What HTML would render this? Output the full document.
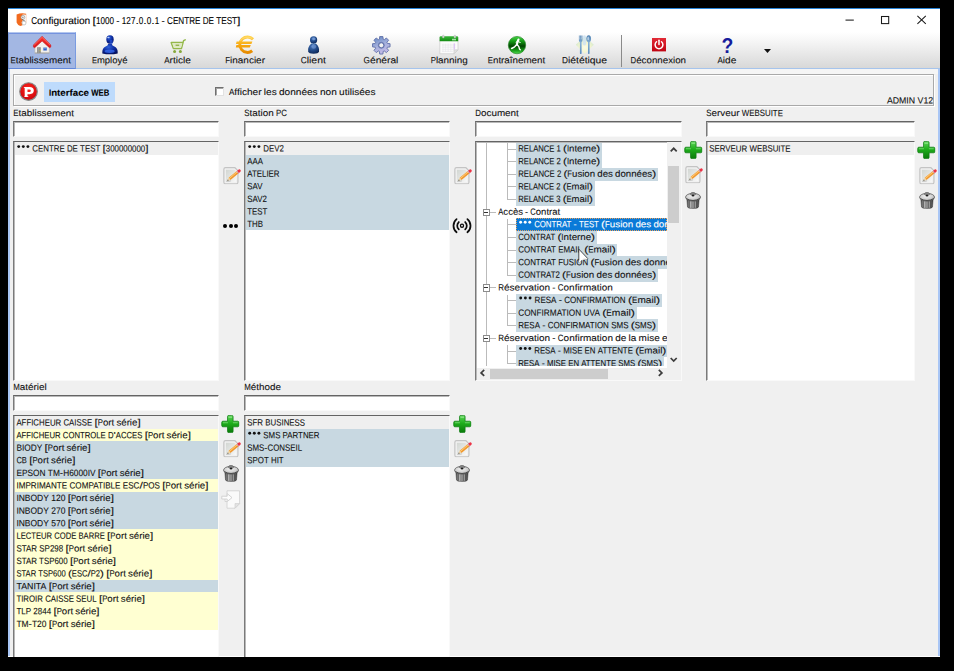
<!DOCTYPE html>
<html><head><meta charset="utf-8"><title>Configuration</title>
<style>
html,body{margin:0;padding:0;background:#000;}
body{width:954px;height:671px;position:relative;overflow:hidden;font-family:"Liberation Sans",sans-serif;}
.b{position:absolute;box-sizing:border-box;}
.t{text-rendering:geometricPrecision;-webkit-text-stroke:0.1px currentColor;position:absolute;left:0;top:0;font-size:9.1px;color:#111;}
.t u{position:absolute;border-radius:50%;background:currentColor;}
.t b{position:absolute;left:0;top:0;transform-origin:0 0;white-space:pre;line-height:1;font-weight:inherit;}
svg{position:absolute;overflow:visible;}
</style></head><body>
<svg width="0" height="0" style="left:0;top:0"><defs>
<linearGradient id="gPlus" x1="0" y1="0" x2="0" y2="1"><stop offset="0" stop-color="#5fd65a"/><stop offset="0.45" stop-color="#1fae1c"/><stop offset="1" stop-color="#0a7a0a"/></linearGradient>
<linearGradient id="gPencil" x1="0" y1="0" x2="1" y2="1"><stop offset="0" stop-color="#ffbb50"/><stop offset="1" stop-color="#e67c12"/></linearGradient>
<linearGradient id="gCan" x1="0" y1="0" x2="1" y2="0"><stop offset="0" stop-color="#4a4a4a"/><stop offset="0.35" stop-color="#b9b9b9"/><stop offset="0.6" stop-color="#8c8c8c"/><stop offset="1" stop-color="#3c3c3c"/></linearGradient>
<radialGradient id="gLid" cx="0.45" cy="0.35" r="0.7"><stop offset="0" stop-color="#f2f2f2"/><stop offset="0.6" stop-color="#cfcfcf"/><stop offset="1" stop-color="#8a8a8a"/></radialGradient>
<linearGradient id="gPaper" x1="0" y1="0" x2="1" y2="1"><stop offset="0" stop-color="#d2d6d2"/><stop offset="0.6" stop-color="#e6e8e6"/><stop offset="1" stop-color="#fafafa"/></linearGradient>
<radialGradient id="gP" cx="0.5" cy="0.35" r="0.7"><stop offset="0" stop-color="#ff2a22"/><stop offset="1" stop-color="#c80008"/></radialGradient>
<linearGradient id="gRoof" x1="0" y1="0" x2="0" y2="1"><stop offset="0" stop-color="#f8352e"/><stop offset="1" stop-color="#dc1418"/></linearGradient>
<radialGradient id="gBlue" cx="0.4" cy="0.3" r="0.8"><stop offset="0" stop-color="#2f62dc"/><stop offset="0.5" stop-color="#0c2a9c"/><stop offset="1" stop-color="#020a52"/></radialGradient>
<radialGradient id="gPawn" cx="0.4" cy="0.3" r="0.8"><stop offset="0" stop-color="#4a78bc"/><stop offset="0.55" stop-color="#1e4684"/><stop offset="1" stop-color="#0c2250"/></radialGradient>
<linearGradient id="gEuro" gradientUnits="userSpaceOnUse" x1="0" y1="2" x2="0" y2="18"><stop offset="0" stop-color="#ffd24a"/><stop offset="0.5" stop-color="#f7a810"/><stop offset="1" stop-color="#e58a00"/></linearGradient>
<linearGradient id="gGear" x1="0.3" y1="0" x2="0.7" y2="1"><stop offset="0" stop-color="#6a8bc4"/><stop offset="0.45" stop-color="#a3afdc"/><stop offset="1" stop-color="#c9bce8"/></linearGradient>
<linearGradient id="gCal" x1="0" y1="0" x2="0" y2="1"><stop offset="0" stop-color="#3cb83c"/><stop offset="1" stop-color="#128a12"/></linearGradient>
<linearGradient id="gRun" x1="0" y1="0" x2="0" y2="1"><stop offset="0" stop-color="#46d446"/><stop offset="0.28" stop-color="#159a15"/><stop offset="0.56" stop-color="#024402"/><stop offset="0.8" stop-color="#169c16"/><stop offset="1" stop-color="#52dc52"/></linearGradient>
<linearGradient id="gFork" x1="0" y1="0" x2="0" y2="1"><stop offset="0" stop-color="#4c7fb0"/><stop offset="0.4" stop-color="#86b0d6"/><stop offset="1" stop-color="#5c8fc0"/></linearGradient>
<radialGradient id="gDiam" cx="0.5" cy="0.62" r="0.55"><stop offset="0" stop-color="#fbfbe6"/><stop offset="0.55" stop-color="#f3f5cf"/><stop offset="1" stop-color="#d2e8cf"/></radialGradient>
<linearGradient id="gPow" x1="0" y1="0" x2="0" y2="1"><stop offset="0" stop-color="#e22a36"/><stop offset="1" stop-color="#c00412"/></linearGradient>

<symbol id="iPlus" viewBox="0 0 18 18"><path d="M6.2 1.6 Q6.2 0.4 7.6 0.4 H10.4 Q11.8 0.4 11.8 1.6 V6.2 H16.4 Q17.6 6.2 17.6 7.6 V10.4 Q17.6 11.8 16.4 11.8 H11.8 V16.4 Q11.8 17.6 10.4 17.6 H7.6 Q6.2 17.6 6.2 16.4 V11.8 H1.6 Q0.4 11.8 0.4 10.4 V7.6 Q0.4 6.2 1.6 6.2 H6.2 Z" fill="url(#gPlus)" stroke="#0c7a10" stroke-width="0.7"/><path d="M7.2 1.6 H10.8 V3 H7.2Z M1.6 7.2 H6.6 V8.2 H1.6Z M11.6 7.2 H16.4 V8.2 H11.6Z" fill="#a5f0a0" opacity="0.55"/></symbol>

<symbol id="iEdit" viewBox="0 0 19 18"><path d="M2.6 0.7 H12.4 L15.6 3.8 V15.8 Q15.6 17.5 13.9 17.5 H2.6 Q0.9 17.5 0.9 15.8 V2.4 Q0.9 0.7 2.6 0.7Z" fill="#f1f1f1" stroke="#c4c4c4" stroke-width="1.25"/><path d="M3 2.8 H11.8 L13.6 4.6 V15.4 H3Z" fill="url(#gPaper)"/><path d="M7.77 13.55 L5.85 11.23 L14.08 4.42 L16.0 6.74Z" fill="url(#gPencil)"/><path d="M6.5 12 L14.7 5.2" stroke="#ffd58a" stroke-width="0.8"/><path d="M14.08 4.42 L16.0 2.84 Q17.4 1.9 18.3 3.1 Q19.2 4.3 17.9 5.2 L16.0 6.74Z" fill="#ec3346"/><path d="M14.08 4.42 L14.7 3.9 L16.6 6.2 L16.0 6.74Z" fill="#c9c9c9"/><path d="M4.5 14.3 L5.85 11.23 L7.77 13.55Z" fill="#efd2a0"/><path d="M4.5 14.3 L5.05 13.0 L5.9 14.0Z" fill="#222"/><path d="M3.4 15 Q6 15.2 8.4 14.4" stroke="#9a9a9a" stroke-width="0.7" fill="none" opacity="0.7"/></symbol>

<symbol id="iTrash" viewBox="0 0 16 17"><path d="M1.9 7.4 L2.5 14.9 Q2.7 16.4 8 16.5 Q13.3 16.4 13.5 14.9 L14.1 7.4Z" fill="url(#gCan)" stroke="#3b3b3b" stroke-width="0.5"/><path d="M4.6 9 V15.6 M6.9 9.2 V16 M9.3 9.2 V16 M11.5 9 V15.6" stroke="#4a4a4a" stroke-width="0.8" opacity="0.75"/><path d="M5.7 9.2 V15.8 M10.4 9.2 V15.8" stroke="#d0d0d0" stroke-width="0.7" opacity="0.6"/><ellipse cx="8.05" cy="5.2" rx="7.5" ry="3.9" fill="url(#gLid)" stroke="#4a4a4a" stroke-width="0.7"/><path d="M5.2 2.6 Q5.6 0.3 8 0.3 Q10.4 0.3 10.8 2.6 Q8 1.9 5.2 2.6Z" fill="#8a8a8a" stroke="#555" stroke-width="0.5"/><ellipse cx="8" cy="3.4" rx="1.5" ry="1.0" fill="#1c1c1c"/><path d="M1.4 6.6 Q8 10.4 14.7 6.6" stroke="#3a3a3a" stroke-width="0.8" fill="none"/></symbol>

<symbol id="iImport" viewBox="0 0 20 19"><path d="M6 0.8 H18.6 V13.6 L14 18.2 H6 V11.5 H4 V6.5 H6Z" fill="#fafafa" stroke="#d2d2d2" stroke-width="0.9"/><path d="M18.6 13.6 H14 V18.2Z" fill="#e4e4e4" stroke="#cecece" stroke-width="0.7"/><path d="M0.8 6.2 H6.2 V3.6 L11 7.6 L6.2 11.6 V9 H0.8Z" fill="#fdfdfd" stroke="#cfcfcf" stroke-width="0.9"/></symbol>

<symbol id="iWave" viewBox="0 0 20 18"><g fill="none" stroke="#0c0c0c" stroke-width="1.8" stroke-linecap="round"><circle cx="10" cy="9" r="1.6" stroke-width="1.3"/><path d="M6.7 5.2 A5.2 5.2 0 0 0 6.7 12.8"/><path d="M13.3 5.2 A5.2 5.2 0 0 1 13.3 12.8"/><path d="M4.4 2.2 A8.8 8.8 0 0 0 4.4 15.8"/><path d="M15.6 2.2 A8.8 8.8 0 0 1 15.6 15.8"/></g></symbol>
</defs></svg>
<div class="b" style="left:8.00px;top:8.00px;width:932.00px;height:649.00px;background:#f0f0f0;"></div>
<div class="b" style="left:8.00px;top:8.00px;width:932.00px;height:24.00px;background:#ffffff;"></div>
<div class="b" style="left:8.00px;top:8.00px;width:932.00px;height:1.00px;background:#2b86d9;"></div>
<span class="t" style="font-size:10.0px;color:#000;"><b style="transform:translate(31.20px,17.00px) scale(0.812,1) rotate(.05deg)">C</b><b style="transform:translate(37.07px,17.00px) scale(1.017,1) rotate(.05deg)">onfiguration</b><b style="transform:translate(92.52px,17.00px) scale(1.233,1) rotate(.05deg)">[</b><b style="transform:translate(95.94px,17.00px) scale(0.812,1) rotate(.05deg)">1000</b><b style="transform:translate(116.30px,17.00px) scale(0.979,1) rotate(.05deg)">-</b><b style="transform:translate(121.85px,17.00px) scale(0.812,1) rotate(.05deg)">127</b><b style="transform:translate(135.40px,17.00px) scale(1.233,1) rotate(.05deg)">.</b><b style="transform:translate(138.83px,17.00px) scale(0.812,1) rotate(.05deg)">0</b><b style="transform:translate(143.34px,17.00px) scale(1.233,1) rotate(.05deg)">.</b><b style="transform:translate(146.77px,17.00px) scale(0.812,1) rotate(.05deg)">0</b><b style="transform:translate(151.28px,17.00px) scale(1.233,1) rotate(.05deg)">.</b><b style="transform:translate(154.71px,17.00px) scale(0.812,1) rotate(.05deg)">1</b><b style="transform:translate(161.52px,17.00px) scale(0.979,1) rotate(.05deg)">-</b><b style="transform:translate(167.07px,17.00px) scale(0.812,1) rotate(.05deg)">CENTRE</b><b style="transform:translate(202.75px,17.00px) scale(0.812,1) rotate(.05deg)">DE</b><b style="transform:translate(216.32px,17.00px) scale(0.812,1) rotate(.05deg)">TEST</b><b style="transform:translate(237.08px,17.00px) scale(1.233,1) rotate(.05deg)">]</b></span>
<svg style="left:15.6px;top:13px" width="11" height="13.4" viewBox="0 0 11 13.4"><path d="M0.6 1.4 Q5.5 -0.6 10.2 0.8 L10.2 9.6 Q8 12.2 4.4 13 Q1.4 12 0.6 9.6Z" fill="#f26a1e"/><path d="M6.6 1.6 Q8.6 1.2 10.2 1.8 L10.2 9.6 Q8.8 11.4 6.6 12.4 L5.6 9.6 L6.8 7 L5.2 4.4Z" fill="#f6f2ee"/><circle cx="6.9" cy="4.3" r="1.9" fill="#fff" stroke="#9a9a9a" stroke-width="0.7"/><circle cx="8" cy="10" r="2" fill="#fff" stroke="#a5a5a5" stroke-width="0.6"/><circle cx="6.9" cy="4.3" r="0.7" fill="#777"/><path d="M6 6.4 L8.6 7.8" stroke="#666" stroke-width="0.9"/></svg>
<svg style="left:840px;top:10px" width="96" height="20" viewBox="0 0 96 20"><g stroke="#1a1a1a" stroke-width="1.05" fill="none"><path d="M5.5 10.1 H13.8"/><rect x="41.5" y="6.5" width="7.2" height="7.1"/><path d="M77.4 5.9 L85.8 13.8 M85.8 5.9 L77.4 13.8"/></g></svg>
<div class="b" style="left:8.00px;top:32.00px;width:932.00px;height:36.40px;background:linear-gradient(#ffffff 0%,#f6f6f6 25%,#e8e8e8 60%,#d8d8d8 100%);"></div>
<div class="b" style="left:8.00px;top:68.00px;width:932.00px;height:1.20px;background:#a6c4ec;"></div>
<div class="b" style="left:10.00px;top:69.20px;width:928.00px;height:4.80px;background:#f5f5f5;"></div>
<div class="b" style="left:8.00px;top:32.00px;width:68.00px;height:37.00px;background:#a3b7e3;border:1px solid #7a9be0;border-top:1px solid #b3c6ee;border-bottom:1px solid #6288da;box-shadow:inset 0 1px 0 #7593de;"></div>
<span class="t"><b style="transform:translate(10.50px,56.30px) scale(0.862,1) rotate(.05deg)">E</b><b style="transform:translate(15.73px,56.30px) scale(1.080,1) rotate(.05deg)">tablissement</b></span>
<span class="t"><b style="transform:translate(91.90px,56.30px) scale(0.832,1) rotate(.05deg)">E</b><b style="transform:translate(96.95px,56.30px) scale(1.042,1) rotate(.05deg)">mployé</b></span>
<span class="t"><b style="transform:translate(164.20px,56.30px) scale(0.883,1) rotate(.05deg)">A</b><b style="transform:translate(169.56px,56.30px) scale(1.106,1) rotate(.05deg)">rticle</b></span>
<span class="t"><b style="transform:translate(225.20px,56.30px) scale(0.875,1) rotate(.05deg)">F</b><b style="transform:translate(230.07px,56.30px) scale(1.096,1) rotate(.05deg)">inancier</b></span>
<span class="t"><b style="transform:translate(300.75px,56.30px) scale(0.913,1) rotate(.05deg)">C</b><b style="transform:translate(306.75px,56.30px) scale(1.144,1) rotate(.05deg)">lient</b></span>
<span class="t"><b style="transform:translate(363.60px,56.30px) scale(0.898,1) rotate(.05deg)">G</b><b style="transform:translate(369.95px,56.30px) scale(1.124,1) rotate(.05deg)">énéral</b></span>
<span class="t"><b style="transform:translate(430.65px,56.30px) scale(0.866,1) rotate(.05deg)">P</b><b style="transform:translate(435.91px,56.30px) scale(1.085,1) rotate(.05deg)">lanning</b></span>
<span class="t"><b style="transform:translate(487.70px,56.30px) scale(0.861,1) rotate(.05deg)">E</b><b style="transform:translate(492.93px,56.30px) scale(1.078,1) rotate(.05deg)">ntraînement</b></span>
<span class="t"><b style="transform:translate(562.05px,56.30px) scale(0.908,1) rotate(.05deg)">D</b><b style="transform:translate(568.02px,56.30px) scale(1.137,1) rotate(.05deg)">iététique</b></span>
<span class="t"><b style="transform:translate(630.60px,56.30px) scale(0.854,1) rotate(.05deg)">D</b><b style="transform:translate(636.21px,56.30px) scale(1.070,1) rotate(.05deg)">éconnexion</b></span>
<span class="t"><b style="transform:translate(717.45px,56.30px) scale(0.888,1) rotate(.05deg)">A</b><b style="transform:translate(722.84px,56.30px) scale(1.112,1) rotate(.05deg)">ide</b></span>
<div class="b" style="left:621.20px;top:34.50px;width:1.00px;height:32.00px;background:#8a8a8a;"></div>
<svg style="left:764px;top:49.4px" width="7" height="4"><path d="M0 0 H7 L3.5 4Z" fill="#111"/></svg>
<svg style="left:32px;top:35px" width="20" height="19" viewBox="0 0 20 19"><path d="M2.9 12.4 L10.1 5.8 L17.3 12.4 V18.1 H2.9Z" fill="#f3f1ed" stroke="#b9b7b2" stroke-width="0.6"/><path d="M2.9 17.6 H17.3 V18.4 H2.9Z" fill="#9e9c98"/><rect x="5.1" y="12.2" width="3.7" height="5.9" fill="#8f8f8a"/><rect x="6.6" y="12.2" width="0.5" height="5.9" fill="#b5b5ae"/><rect x="7.7" y="15" width="0.8" height="1.2" fill="#e2d23a"/><rect x="11.1" y="12.3" width="3.9" height="3.5" fill="#2a5cc2" stroke="#d9dde6" stroke-width="0.5"/><rect x="11.4" y="13.4" width="3.3" height="0.7" fill="#7fa6ea"/><path d="M1.4 10 L10.1 1.2 L18.8 10 L18.8 12.1 L17.5 12.7 L10.1 6 L2.7 12.7 L1.4 12.1Z" fill="url(#gRoof)" stroke="#d4181c" stroke-width="0.5" stroke-linejoin="round"/><path d="M2.2 10.2 L10.1 2.4 L18 10.2" stroke="#ff7a6a" stroke-width="1" fill="none" opacity="0.8"/></svg>
<svg style="left:102px;top:35.3px" width="16" height="19.6" viewBox="0 0 16 19.6"><path d="M0.3 18.4 Q0 13 3.6 11.6 Q6.1 10.8 6.1 9 H9.9 Q9.9 10.8 12.4 11.6 Q16 13 15.7 18.4 Q8 20.2 0.3 18.4Z" fill="url(#gBlue)"/><ellipse cx="8" cy="4.5" rx="3.7" ry="4.2" fill="url(#gBlue)"/><ellipse cx="7.6" cy="16.3" rx="5" ry="1.7" fill="#3a6ef2" opacity="0.75"/><ellipse cx="9.2" cy="7.2" rx="1.6" ry="2.4" fill="#2a5ae6" opacity="0.6"/><ellipse cx="6.4" cy="2.5" rx="1.2" ry="0.8" fill="#cfe0ff" opacity="0.85"/></svg>
<svg style="left:170px;top:38.6px" width="16" height="14.4" viewBox="0 0 16 14.4"><g fill="none" stroke="#94b84a" stroke-width="1.5" stroke-linejoin="round" stroke-linecap="round"><path d="M15.2 0.8 L13.6 1.6 L11.4 9.6 H3.4 L1.2 3.6 H12.8"/></g><path d="M2.2 4.2 H12.4 L11 9 H3.9Z" fill="#dfe9c4"/><rect x="5.6" y="5.6" width="3.6" height="1.3" fill="#8fae46"/><circle cx="4.6" cy="12.4" r="1.5" fill="#86a83c"/><circle cx="10.4" cy="12.4" r="1.5" fill="#86a83c"/></svg>
<svg style="left:235px;top:35px" width="20" height="20" viewBox="0 0 20 20"><g fill="none" stroke="url(#gEuro)" stroke-linecap="butt"><path d="M18 4.3 A7.7 7.7 0 1 0 17.2 15.8" stroke-width="3"/></g><path d="M1.6 6.5 H17.4 L16.4 8.9 H1.0Z M1.4 10.1 H15.8 L14.8 12.5 H0.8Z" fill="url(#gEuro)"/><path d="M17.2 3.6 A8.4 8.4 0 0 0 5.2 6.2" fill="none" stroke="#ffe08a" stroke-width="0.8" opacity="0.8"/></svg>
<svg style="left:308.1px;top:35.8px" width="11.4" height="18" viewBox="0 0 11.4 18"><path d="M3.4 7.6 Q5.6 6.6 7.8 7.6 Q11.8 11 11 15.4 Q10.4 17.6 5.6 17.7 Q0.8 17.6 0.2 15.4 Q-0.6 11 3.4 7.6Z" fill="url(#gPawn)"/><circle cx="5.6" cy="3.9" r="3.6" fill="url(#gPawn)"/><ellipse cx="5.9" cy="2.9" rx="1.7" ry="1.4" fill="#9fc0f4" opacity="0.55"/><ellipse cx="5.8" cy="10.6" rx="2.4" ry="2.2" fill="#8fb2ec" opacity="0.45"/><path d="M3.2 7.5 Q5.6 8.6 8 7.5" stroke="#9cc4e8" stroke-width="0.7" fill="none" opacity="0.8"/></svg>
<svg style="left:371.8px;top:35.9px" width="18.6" height="18.6" viewBox="0 0 19.2 19.2"><path d="M18.65 7.95 L18.65 11.25 L15.91 11.55 L15.44 12.68 L17.16 14.84 L14.84 17.16 L12.68 15.44 L11.55 15.91 L11.25 18.65 L7.95 18.65 L7.65 15.91 L6.52 15.44 L4.36 17.16 L2.04 14.84 L3.76 12.68 L3.29 11.55 L0.55 11.25 L0.55 7.95 L3.29 7.65 L3.76 6.52 L2.04 4.36 L4.36 2.04 L6.52 3.76 L7.65 3.29 L7.95 0.55 L11.25 0.55 L11.55 3.29 L12.68 3.76 L14.84 2.04 L17.16 4.36 L15.44 6.52 L15.91 7.65Z M12.2 9.6 A2.6 2.6 0 1 0 7.0 9.6 A2.6 2.6 0 1 0 12.2 9.6Z" fill="url(#gGear)" fill-rule="evenodd" stroke="#5d6da6" stroke-width="0.9" stroke-linejoin="round"/><circle cx="9.6" cy="9.6" r="3.1" fill="none" stroke="#5f6fa8" stroke-width="0.8" opacity="0.9"/></svg>
<svg style="left:439.2px;top:35.4px" width="20" height="19.4" viewBox="0 0 20 19.4"><path d="M0.8 2.2 H19 V14.8 L15 18.8 H0.8Z" fill="#fbfbfb" stroke="#cfcfcf" stroke-width="0.8"/><path d="M19 14.8 H15 V18.8Z" fill="#e3e3e3" stroke="#c9c9c9" stroke-width="0.6"/><path d="M0.6 2.4 Q0.6 1.2 1.8 1.2 H18 Q19.2 1.2 19.2 2.4 V6.3 H0.6Z" fill="url(#gCal)"/><g stroke="#e6e6ea" stroke-width="0.6"><path d="M4 8.6 V17 M6.6 8.6 V17 M9.2 8.6 V17 M11.8 8.6 V17 M14.4 8.6 V15.4 M3 10 H16.6 M3 12.2 H16.6 M3 14.4 H16.6 M3 16.4 H14"/></g><path d="M15.3 8.4 V14.6" stroke="#d8b8f4" stroke-width="1"/><rect x="3.4" y="0.2" width="1.8" height="2.8" rx="0.8" fill="#d9d9d9" stroke="#a8a8a8" stroke-width="0.4"/><rect x="15" y="0.2" width="1.8" height="2.8" rx="0.8" fill="#d9d9d9" stroke="#a8a8a8" stroke-width="0.4"/><rect x="13" y="3.8" width="4" height="1.6" fill="#c8f0c8" opacity="0.8"/></svg>
<svg style="left:507.9px;top:36px" width="18" height="18.2" viewBox="0 0 18 18.2"><circle cx="9" cy="9.1" r="8.7" fill="url(#gRun)" stroke="#1c7c1c" stroke-width="0.6"/><g fill="none" stroke="#fff" stroke-linecap="round" stroke-linejoin="round"><path d="M10.5 3.5 L9.4 6 L9 8.4" stroke-width="2.1"/><path d="M9 8.4 L6.6 10.8 L3.6 12.5" stroke-width="1.5"/><path d="M9.2 8.6 L10.8 10.6 L11.6 13.2 L12.3 13.8" stroke-width="1.4"/><path d="M10 5.6 L12.2 6.4" stroke-width="1"/><path d="M9.8 5.2 L8 6.4" stroke-width="1"/></g></svg>
<svg style="left:575px;top:35.4px" width="20" height="20" viewBox="0 0 20 20"><path d="M0.8 9.8 L9.8 1.2 L18.8 9.8 L9.8 18.9Z" fill="url(#gDiam)"/><path d="M8 1 Q9.4 -0.4 10.8 1 L11.2 9 Q9.4 12 7.6 9Z" fill="#cfe3f2" opacity="0.85"/><g fill="url(#gFork)"><path d="M3.9 0.5 H4.6 V4.6 H5.1 V0.5 H5.9 V4.6 H6.4 V0.5 H7.4 V5.4 Q7.4 6.6 6.6 7 V18.6 Q5.75 19.6 4.9 18.6 V7 Q3.9 6.6 3.9 5.4Z"/><path d="M13.7 0.3 Q16.1 0.6 16.1 4 Q16.1 6.6 14.6 7.3 V18.6 Q13.8 19.6 13 18.6 V7.3 Q11.3 6.6 11.3 4 Q11.3 0.6 13.7 0.3Z"/></g><ellipse cx="13.2" cy="3.4" rx="0.9" ry="1.9" fill="#cfe0f0" opacity="0.7"/></svg>
<svg style="left:652px;top:38.2px" width="14" height="13.4" viewBox="0 0 14 13.4"><rect x="0" y="0" width="14" height="13.4" fill="url(#gPow)"/><path d="M4.5 3.8 A3.9 3.9 0 1 0 9.5 3.8" fill="none" stroke="#fff" stroke-width="1.5" stroke-linecap="round"/><path d="M7 2.2 V6.6" stroke="#fff" stroke-width="1.5" stroke-linecap="round"/></svg>
<span class="t" style="font-size:21.5px;font-weight:bold;color:#161c9c;-webkit-text-stroke:0;"><b style="transform:translate(721.4px,36px) scale(0.9,1) rotate(.05deg)">?</b></span>
<div class="b" style="left:8.00px;top:69.00px;width:2.00px;height:588.00px;background:#a9c6f5;"></div>
<div class="b" style="left:938.00px;top:69.00px;width:2.00px;height:588.00px;background:#a9c6f5;"></div>
<div class="b" style="left:8.00px;top:656.00px;width:932.00px;height:1.00px;background:#ffffff;"></div>
<div class="b" style="left:13.00px;top:74.30px;width:921.40px;height:32.10px;background:transparent;border:1px solid #a9a9a9;box-shadow:inset 1px 1px 0 #fff, 1px 1px 0 #fff;"></div>
<svg style="left:19.2px;top:82.3px" width="19.2" height="19.2" viewBox="0 0 19.2 19.2"><circle cx="9.55" cy="9.55" r="9.5" fill="#dcdcdc"/><circle cx="9.55" cy="9.55" r="8.8" fill="url(#gP)" stroke="#868c8c" stroke-width="1.1"/><path d="M4.6 5 H10.6 Q14.8 5 14.8 8.6 Q14.8 12.2 10.6 12.2 H8.5 V14 L9.8 15.1 H5.1 L5.7 14 V6.2 L4.6 5Z M8.5 7.5 V10 H10.3 Q11.8 10 11.8 8.75 Q11.8 7.5 10.3 7.5Z" fill="#fff" fill-rule="evenodd"/></svg>
<div class="b" style="left:44.20px;top:82.20px;width:70.60px;height:19.70px;background:#bedbfc;"></div>
<span class="t" style="color:#000;font-weight:bold;"><b style="transform:translate(49.00px,88.80px) scale(0.853,1) rotate(.05deg)">I</b><b style="transform:translate(51.16px,88.80px) scale(1.068,1) rotate(.05deg)">nterface</b><b style="transform:translate(91.17px,88.80px) scale(0.853,1) rotate(.05deg)">WEB</b></span>
<div class="b" style="left:214.70px;top:87.20px;width:9.30px;height:9.20px;background:#fff;border:1px solid #6f6f6f;border-right-color:#e2e2e2;border-bottom-color:#e2e2e2;box-shadow:inset 1px 1px 0 #a5a5a5;"></div>
<span class="t"><b style="transform:translate(228.90px,87.90px) scale(0.885,1) rotate(.05deg)">A</b><b style="transform:translate(234.27px,87.90px) scale(1.108,1) rotate(.05deg)">fficher</b><b style="transform:translate(263.83px,87.90px) scale(1.108,1) rotate(.05deg)">les</b><b style="transform:translate(278.99px,87.90px) scale(1.108,1) rotate(.05deg)">données</b><b style="transform:translate(319.96px,87.90px) scale(1.108,1) rotate(.05deg)">non</b><b style="transform:translate(339.06px,87.90px) scale(1.108,1) rotate(.05deg)">utilisées</b></span>
<span class="t"><b style="transform:translate(886.90px,96.60px) scale(0.963,1) rotate(.05deg)">ADMIN</b><b style="transform:translate(917.61px,96.60px) scale(0.963,1) rotate(.05deg)">V12</b></span>
<span class="t"><b style="transform:translate(13.30px,109.10px) scale(0.866,1) rotate(.05deg)">E</b><b style="transform:translate(18.56px,109.10px) scale(1.085,1) rotate(.05deg)">tablissement</b></span>
<div class="b" style="left:13.00px;top:121.00px;width:206.00px;height:16.00px;background:#fff;border-left:1px solid #7a7a7a;border-top:1px solid #646464;border-right:1px solid #f9f9f9;border-bottom:1px solid #f9f9f9;box-shadow:inset 1px 1px 0 #b9b9b9;"></div>
<div class="b" style="left:13.00px;top:141.00px;width:206.00px;height:240.00px;background:#fff;border-left:1px solid #7a7a7a;border-top:1px solid #646464;border-right:1px solid #f9f9f9;border-bottom:1px solid #f9f9f9;box-shadow:inset 1px 1px 0 #b9b9b9;"></div>
<span class="t"><b style="transform:translate(244.30px,109.10px) scale(0.866,1) rotate(.05deg)">S</b><b style="transform:translate(249.56px,109.10px) scale(1.085,1) rotate(.05deg)">tation</b><b style="transform:translate(275.92px,109.10px) scale(0.866,1) rotate(.05deg)">PC</b></span>
<div class="b" style="left:244.00px;top:121.00px;width:206.00px;height:16.00px;background:#fff;border-left:1px solid #7a7a7a;border-top:1px solid #646464;border-right:1px solid #f9f9f9;border-bottom:1px solid #f9f9f9;box-shadow:inset 1px 1px 0 #b9b9b9;"></div>
<div class="b" style="left:244.00px;top:141.00px;width:206.00px;height:240.00px;background:#fff;border-left:1px solid #7a7a7a;border-top:1px solid #646464;border-right:1px solid #f9f9f9;border-bottom:1px solid #f9f9f9;box-shadow:inset 1px 1px 0 #b9b9b9;"></div>
<span class="t"><b style="transform:translate(475.30px,109.10px) scale(0.866,1) rotate(.05deg)">D</b><b style="transform:translate(480.99px,109.10px) scale(1.085,1) rotate(.05deg)">ocument</b></span>
<div class="b" style="left:475.00px;top:121.00px;width:207.00px;height:16.00px;background:#fff;border-left:1px solid #7a7a7a;border-top:1px solid #646464;border-right:1px solid #f9f9f9;border-bottom:1px solid #f9f9f9;box-shadow:inset 1px 1px 0 #b9b9b9;"></div>
<div class="b" style="left:475.00px;top:141.00px;width:207.00px;height:240.00px;background:#fff;border-left:1px solid #7a7a7a;border-top:1px solid #646464;border-right:1px solid #f9f9f9;border-bottom:1px solid #f9f9f9;box-shadow:inset 1px 1px 0 #b9b9b9;"></div>
<span class="t"><b style="transform:translate(706.30px,109.10px) scale(0.866,1) rotate(.05deg)">S</b><b style="transform:translate(711.56px,109.10px) scale(1.085,1) rotate(.05deg)">erveur</b><b style="transform:translate(741.76px,109.10px) scale(0.866,1) rotate(.05deg)">WEBSUITE</b></span>
<div class="b" style="left:706.00px;top:121.00px;width:209.00px;height:16.00px;background:#fff;border-left:1px solid #7a7a7a;border-top:1px solid #646464;border-right:1px solid #f9f9f9;border-bottom:1px solid #f9f9f9;box-shadow:inset 1px 1px 0 #b9b9b9;"></div>
<div class="b" style="left:706.00px;top:141.00px;width:209.00px;height:240.00px;background:#fff;border-left:1px solid #7a7a7a;border-top:1px solid #646464;border-right:1px solid #f9f9f9;border-bottom:1px solid #f9f9f9;box-shadow:inset 1px 1px 0 #b9b9b9;"></div>
<div class="b" style="left:14.60px;top:142.20px;width:203.40px;height:12.63px;background:#efefef;"></div>
<span class="t"><b style="transform:translate(32.32px,144.60px) scale(0.866,1) rotate(.05deg)">CENTRE</b><b style="transform:translate(66.94px,144.60px) scale(0.866,1) rotate(.05deg)">DE</b><b style="transform:translate(80.11px,144.60px) scale(0.866,1) rotate(.05deg)">TEST</b><b style="transform:translate(102.47px,144.60px) scale(1.314,1) rotate(.05deg)">[</b><b style="transform:translate(105.80px,144.60px) scale(0.866,1) rotate(.05deg)">300000000</b><b style="transform:translate(145.24px,144.60px) scale(1.314,1) rotate(.05deg)">]</b></span><svg style="left:16px;top:143px" width="16" height="9" fill="#111"><circle cx="2.70" cy="3.60" r="1.45"/><circle cx="7.30" cy="3.60" r="1.45"/><circle cx="11.90" cy="3.60" r="1.45"/></svg>
<div class="b" style="left:245.60px;top:142.20px;width:203.70px;height:12.63px;background:#efefef;"></div>
<span class="t"><b style="transform:translate(263.32px,144.60px) scale(0.866,1) rotate(.05deg)">DEV2</b></span><svg style="left:247px;top:143px" width="16" height="9" fill="#111"><circle cx="2.70" cy="3.60" r="1.45"/><circle cx="7.30" cy="3.60" r="1.45"/><circle cx="11.90" cy="3.60" r="1.45"/></svg>
<div class="b" style="left:245.60px;top:154.78px;width:203.70px;height:12.63px;background:#c8d8e1;"></div>
<span class="t"><b style="transform:translate(247.30px,157.18px) scale(0.866,1) rotate(.05deg)">AAA</b></span>
<div class="b" style="left:245.60px;top:167.36px;width:203.70px;height:12.63px;background:#c8d8e1;"></div>
<span class="t"><b style="transform:translate(247.30px,169.76px) scale(0.866,1) rotate(.05deg)">ATELIER</b></span>
<div class="b" style="left:245.60px;top:179.94px;width:203.70px;height:12.63px;background:#c8d8e1;"></div>
<span class="t"><b style="transform:translate(247.30px,182.34px) scale(0.866,1) rotate(.05deg)">SAV</b></span>
<div class="b" style="left:245.60px;top:192.52px;width:203.70px;height:12.63px;background:#c8d8e1;"></div>
<span class="t"><b style="transform:translate(247.30px,194.92px) scale(0.866,1) rotate(.05deg)">SAV2</b></span>
<div class="b" style="left:245.60px;top:205.10px;width:203.70px;height:12.63px;background:#c8d8e1;"></div>
<span class="t"><b style="transform:translate(247.30px,207.50px) scale(0.866,1) rotate(.05deg)">TEST</b></span>
<div class="b" style="left:245.60px;top:217.68px;width:203.70px;height:12.63px;background:#c8d8e1;"></div>
<span class="t"><b style="transform:translate(247.30px,220.08px) scale(0.866,1) rotate(.05deg)">THB</b></span>
<div class="b" style="left:707.60px;top:142.20px;width:206.40px;height:12.63px;background:#efefef;"></div>
<span class="t"><b style="transform:translate(709.30px,144.60px) scale(0.866,1) rotate(.05deg)">SERVEUR</b><b style="transform:translate(749.48px,144.60px) scale(0.866,1) rotate(.05deg)">WEBSUITE</b></span>
<div class="b" style="left:476.90px;top:142.20px;width:190.50px;height:223.90px;overflow:hidden;">
<div class="b" style="left:9.00px;top:-1.40px;width:1.00px;height:227.20px;background:transparent;background:#bbbbbb;"></div>
<div class="b" style="left:29.80px;top:-1.40px;width:1.00px;height:58.79px;background:transparent;background:#bbbbbb;"></div>
<div class="b" style="left:29.80px;top:76.82px;width:1.00px;height:56.29px;background:transparent;background:#bbbbbb;"></div>
<div class="b" style="left:29.80px;top:152.54px;width:1.00px;height:31.05px;background:transparent;background:#bbbbbb;"></div>
<div class="b" style="left:29.80px;top:203.02px;width:1.00px;height:18.43px;background:transparent;background:#bbbbbb;"></div>
<div class="b" style="left:30.30px;top:6.41px;width:8.80px;height:1.00px;background:transparent;background:#bbbbbb;"></div>
<div class="b" style="left:39.50px;top:0.60px;width:85.45px;height:12.67px;background:#c8d8e1;"></div>
<span class="t"><b style="transform:translate(41.25px,2.60px) scale(0.842,1) rotate(.05deg)">RELANCE</b><b style="transform:translate(79.62px,2.60px) scale(0.842,1) rotate(.05deg)">1</b><b style="transform:translate(86.05px,2.60px) scale(1.279,1) rotate(.05deg)">(</b><b style="transform:translate(89.92px,2.60px) scale(0.842,1) rotate(.05deg)">I</b><b style="transform:translate(92.05px,2.60px) scale(1.055,1) rotate(.05deg)">nterne</b><b style="transform:translate(119.28px,2.60px) scale(1.279,1) rotate(.05deg)">)</b></span>
<div class="b" style="left:30.30px;top:19.03px;width:8.80px;height:1.00px;background:transparent;background:#bbbbbb;"></div>
<div class="b" style="left:39.50px;top:13.22px;width:85.45px;height:12.67px;background:#c8d8e1;"></div>
<span class="t"><b style="transform:translate(41.25px,15.22px) scale(0.842,1) rotate(.05deg)">RELANCE</b><b style="transform:translate(79.62px,15.22px) scale(0.842,1) rotate(.05deg)">2</b><b style="transform:translate(86.05px,15.22px) scale(1.279,1) rotate(.05deg)">(</b><b style="transform:translate(89.92px,15.22px) scale(0.842,1) rotate(.05deg)">I</b><b style="transform:translate(92.05px,15.22px) scale(1.055,1) rotate(.05deg)">nterne</b><b style="transform:translate(119.28px,15.22px) scale(1.279,1) rotate(.05deg)">)</b></span>
<div class="b" style="left:30.30px;top:31.65px;width:8.80px;height:1.00px;background:transparent;background:#bbbbbb;"></div>
<div class="b" style="left:39.50px;top:25.84px;width:141.45px;height:12.67px;background:#c8d8e1;"></div>
<span class="t"><b style="transform:translate(41.25px,27.84px) scale(0.849,1) rotate(.05deg)">RELANCE</b><b style="transform:translate(79.92px,27.84px) scale(0.849,1) rotate(.05deg)">2</b><b style="transform:translate(86.40px,27.84px) scale(1.289,1) rotate(.05deg)">(</b><b style="transform:translate(90.30px,27.84px) scale(0.849,1) rotate(.05deg)">F</b><b style="transform:translate(95.02px,27.84px) scale(1.063,1) rotate(.05deg)">usion</b><b style="transform:translate(120.34px,27.84px) scale(1.063,1) rotate(.05deg)">des</b><b style="transform:translate(138.12px,27.84px) scale(1.063,1) rotate(.05deg)">données</b><b style="transform:translate(175.25px,27.84px) scale(1.289,1) rotate(.05deg)">)</b></span>
<div class="b" style="left:30.30px;top:44.27px;width:8.80px;height:1.00px;background:transparent;background:#bbbbbb;"></div>
<div class="b" style="left:39.50px;top:38.46px;width:78.25px;height:12.67px;background:#c8d8e1;"></div>
<span class="t"><b style="transform:translate(41.25px,40.46px) scale(0.836,1) rotate(.05deg)">RELANCE</b><b style="transform:translate(79.33px,40.46px) scale(0.836,1) rotate(.05deg)">2</b><b style="transform:translate(85.71px,40.46px) scale(1.269,1) rotate(.05deg)">(</b><b style="transform:translate(89.56px,40.46px) scale(0.836,1) rotate(.05deg)">E</b><b style="transform:translate(94.63px,40.46px) scale(1.047,1) rotate(.05deg)">mail</b><b style="transform:translate(112.10px,40.46px) scale(1.269,1) rotate(.05deg)">)</b></span>
<div class="b" style="left:30.30px;top:56.89px;width:8.80px;height:1.00px;background:transparent;background:#bbbbbb;"></div>
<div class="b" style="left:39.50px;top:51.08px;width:78.25px;height:12.67px;background:#c8d8e1;"></div>
<span class="t"><b style="transform:translate(41.25px,53.08px) scale(0.836,1) rotate(.05deg)">RELANCE</b><b style="transform:translate(79.33px,53.08px) scale(0.836,1) rotate(.05deg)">3</b><b style="transform:translate(85.71px,53.08px) scale(1.269,1) rotate(.05deg)">(</b><b style="transform:translate(89.56px,53.08px) scale(0.836,1) rotate(.05deg)">E</b><b style="transform:translate(94.63px,53.08px) scale(1.047,1) rotate(.05deg)">mail</b><b style="transform:translate(112.10px,53.08px) scale(1.269,1) rotate(.05deg)">)</b></span>
<div class="b" style="left:13.50px;top:69.51px;width:6.10px;height:1.00px;background:transparent;background:#bbbbbb;"></div>
<div class="b" style="left:5.90px;top:66.41px;width:7.20px;height:7.20px;background:#fff;border:0.9px solid #8c8c8c;"></div>
<div class="b" style="left:7.50px;top:69.56px;width:4.00px;height:0.90px;background:#333;"></div>
<span class="t"><b style="transform:translate(21.30px,65.70px) scale(0.836,1) rotate(.05deg)">A</b><b style="transform:translate(26.38px,65.70px) scale(1.048,1) rotate(.05deg)">ccès</b><b style="transform:translate(48.12px,65.70px) scale(1.008,1) rotate(.05deg)">-</b><b style="transform:translate(53.33px,65.70px) scale(0.836,1) rotate(.05deg)">C</b><b style="transform:translate(58.82px,65.70px) scale(1.048,1) rotate(.05deg)">ontrat</b></span>
<div class="b" style="left:30.30px;top:82.13px;width:8.80px;height:1.00px;background:transparent;background:#bbbbbb;"></div>
<div class="b" style="left:39.50px;top:76.12px;width:150.40px;height:12.62px;background:#0a7ad8;outline:1px dotted #e8a05a;outline-offset:-1px;"></div>
<span class="t" style="color:#fff;"><b style="transform:translate(57.15px,78.32px) scale(0.859,1) rotate(.05deg)">CONTRAT</b><b style="transform:translate(96.56px,78.32px) scale(1.036,1) rotate(.05deg)">-</b><b style="transform:translate(101.90px,78.32px) scale(0.859,1) rotate(.05deg)">TEST</b><b style="transform:translate(124.09px,78.32px) scale(1.304,1) rotate(.05deg)">(</b><b style="transform:translate(128.04px,78.32px) scale(0.859,1) rotate(.05deg)">F</b><b style="transform:translate(132.82px,78.32px) scale(1.076,1) rotate(.05deg)">usion</b><b style="transform:translate(158.43px,78.32px) scale(1.076,1) rotate(.05deg)">des</b><b style="transform:translate(176.42px,78.32px) scale(1.076,1) rotate(.05deg)">données</b><b style="transform:translate(214.00px,78.32px) scale(1.304,1) rotate(.05deg)">)</b></span><svg style="left:41px;top:77px" width="16" height="9" fill="#fff"><circle cx="2.63" cy="3.32" r="1.45"/><circle cx="7.20" cy="3.32" r="1.45"/><circle cx="11.76" cy="3.32" r="1.45"/></svg>
<div class="b" style="left:30.30px;top:94.75px;width:8.80px;height:1.00px;background:transparent;background:#bbbbbb;"></div>
<div class="b" style="left:39.50px;top:88.94px;width:80.35px;height:12.67px;background:#c8d8e1;"></div>
<span class="t"><b style="transform:translate(41.25px,90.94px) scale(0.854,1) rotate(.05deg)">CONTRAT</b><b style="transform:translate(80.43px,90.94px) scale(1.296,1) rotate(.05deg)">(</b><b style="transform:translate(84.36px,90.94px) scale(0.854,1) rotate(.05deg)">I</b><b style="transform:translate(86.52px,90.94px) scale(1.070,1) rotate(.05deg)">nterne</b><b style="transform:translate(114.12px,90.94px) scale(1.296,1) rotate(.05deg)">)</b></span>
<div class="b" style="left:30.30px;top:107.37px;width:8.80px;height:1.00px;background:transparent;background:#bbbbbb;"></div>
<div class="b" style="left:39.50px;top:101.56px;width:101.05px;height:12.67px;background:#c8d8e1;"></div>
<span class="t"><b style="transform:translate(41.25px,103.56px) scale(0.871,1) rotate(.05deg)">CONTRAT</b><b style="transform:translate(81.21px,103.56px) scale(0.871,1) rotate(.05deg)">EMAIL</b><b style="transform:translate(107.24px,103.56px) scale(1.322,1) rotate(.05deg)">(</b><b style="transform:translate(111.25px,103.56px) scale(0.871,1) rotate(.05deg)">E</b><b style="transform:translate(116.54px,103.56px) scale(1.091,1) rotate(.05deg)">mail</b><b style="transform:translate(134.74px,103.56px) scale(1.322,1) rotate(.05deg)">)</b></span>
<div class="b" style="left:30.30px;top:119.99px;width:8.80px;height:1.00px;background:transparent;background:#bbbbbb;"></div>
<div class="b" style="left:39.50px;top:114.18px;width:151.00px;height:12.67px;background:#c8d8e1;"></div>
<span class="t"><b style="transform:translate(41.25px,116.18px) scale(0.871,1) rotate(.05deg)">CONTRAT</b><b style="transform:translate(81.21px,116.18px) scale(0.871,1) rotate(.05deg)">FUSION</b><b style="transform:translate(113.39px,116.18px) scale(1.322,1) rotate(.05deg)">(</b><b style="transform:translate(117.39px,116.18px) scale(0.871,1) rotate(.05deg)">F</b><b style="transform:translate(122.24px,116.18px) scale(1.091,1) rotate(.05deg)">usion</b><b style="transform:translate(148.21px,116.18px) scale(1.091,1) rotate(.05deg)">des</b><b style="transform:translate(166.45px,116.18px) scale(1.091,1) rotate(.05deg)">données</b><b style="transform:translate(204.54px,116.18px) scale(1.322,1) rotate(.05deg)">)</b></span>
<div class="b" style="left:30.30px;top:132.61px;width:8.80px;height:1.00px;background:transparent;background:#bbbbbb;"></div>
<div class="b" style="left:39.50px;top:126.80px;width:141.45px;height:12.67px;background:#c8d8e1;"></div>
<span class="t"><b style="transform:translate(41.25px,128.80px) scale(0.861,1) rotate(.05deg)">CONTRAT2</b><b style="transform:translate(85.10px,128.80px) scale(1.307,1) rotate(.05deg)">(</b><b style="transform:translate(89.06px,128.80px) scale(0.861,1) rotate(.05deg)">F</b><b style="transform:translate(93.84px,128.80px) scale(1.078,1) rotate(.05deg)">usion</b><b style="transform:translate(119.51px,128.80px) scale(1.078,1) rotate(.05deg)">des</b><b style="transform:translate(137.54px,128.80px) scale(1.078,1) rotate(.05deg)">données</b><b style="transform:translate(175.19px,128.80px) scale(1.307,1) rotate(.05deg)">)</b></span>
<div class="b" style="left:13.50px;top:145.23px;width:6.10px;height:1.00px;background:transparent;background:#bbbbbb;"></div>
<div class="b" style="left:5.90px;top:142.13px;width:7.20px;height:7.20px;background:#fff;border:0.9px solid #8c8c8c;"></div>
<div class="b" style="left:7.50px;top:145.28px;width:4.00px;height:0.90px;background:#333;"></div>
<span class="t"><b style="transform:translate(21.30px,141.42px) scale(0.875,1) rotate(.05deg)">R</b><b style="transform:translate(27.05px,141.42px) scale(1.097,1) rotate(.05deg)">éservation</b><b style="transform:translate(75.34px,141.42px) scale(1.055,1) rotate(.05deg)">-</b><b style="transform:translate(80.78px,141.42px) scale(0.875,1) rotate(.05deg)">C</b><b style="transform:translate(86.54px,141.42px) scale(1.097,1) rotate(.05deg)">onfirmation</b></span>
<div class="b" style="left:30.30px;top:157.85px;width:8.80px;height:1.00px;background:transparent;background:#bbbbbb;"></div>
<div class="b" style="left:39.50px;top:152.04px;width:145.25px;height:12.67px;background:#c8d8e1;"></div>
<span class="t"><b style="transform:translate(57.60px,154.04px) scale(0.883,1) rotate(.05deg)">RESA</b><b style="transform:translate(81.76px,154.04px) scale(1.065,1) rotate(.05deg)">-</b><b style="transform:translate(87.25px,154.04px) scale(0.883,1) rotate(.05deg)">CONFIRMATION</b><b style="transform:translate(151.00px,154.04px) scale(1.341,1) rotate(.05deg)">(</b><b style="transform:translate(155.06px,154.04px) scale(0.883,1) rotate(.05deg)">E</b><b style="transform:translate(160.42px,154.04px) scale(1.107,1) rotate(.05deg)">mail</b><b style="transform:translate(178.89px,154.04px) scale(1.341,1) rotate(.05deg)">)</b></span><svg style="left:41px;top:153px" width="17" height="9" fill="#111"><circle cx="2.70" cy="3.04" r="1.45"/><circle cx="7.39" cy="3.04" r="1.45"/><circle cx="12.08" cy="3.04" r="1.45"/></svg>
<div class="b" style="left:30.30px;top:170.47px;width:8.80px;height:1.00px;background:transparent;background:#bbbbbb;"></div>
<div class="b" style="left:39.50px;top:164.66px;width:120.25px;height:12.67px;background:#c8d8e1;"></div>
<span class="t"><b style="transform:translate(41.25px,166.66px) scale(0.905,1) rotate(.05deg)">CONFIRMATION</b><b style="transform:translate(106.56px,166.66px) scale(0.905,1) rotate(.05deg)">UVA</b><b style="transform:translate(125.21px,166.66px) scale(1.374,1) rotate(.05deg)">(</b><b style="transform:translate(129.38px,166.66px) scale(0.905,1) rotate(.05deg)">E</b><b style="transform:translate(134.87px,166.66px) scale(1.134,1) rotate(.05deg)">mail</b><b style="transform:translate(153.79px,166.66px) scale(1.374,1) rotate(.05deg)">)</b></span>
<div class="b" style="left:30.30px;top:183.09px;width:8.80px;height:1.00px;background:transparent;background:#bbbbbb;"></div>
<div class="b" style="left:39.50px;top:177.28px;width:141.45px;height:12.67px;background:#c8d8e1;"></div>
<span class="t"><b style="transform:translate(41.25px,179.28px) scale(0.879,1) rotate(.05deg)">RESA</b><b style="transform:translate(65.28px,179.28px) scale(1.059,1) rotate(.05deg)">-</b><b style="transform:translate(70.75px,179.28px) scale(0.879,1) rotate(.05deg)">CONFIRMATION</b><b style="transform:translate(134.15px,179.28px) scale(0.879,1) rotate(.05deg)">SMS</b><b style="transform:translate(153.74px,179.28px) scale(1.334,1) rotate(.05deg)">(</b><b style="transform:translate(157.78px,179.28px) scale(0.879,1) rotate(.05deg)">SMS</b><b style="transform:translate(175.11px,179.28px) scale(1.334,1) rotate(.05deg)">)</b></span>
<div class="b" style="left:13.50px;top:195.71px;width:6.10px;height:1.00px;background:transparent;background:#bbbbbb;"></div>
<div class="b" style="left:5.90px;top:192.61px;width:7.20px;height:7.20px;background:#fff;border:0.9px solid #8c8c8c;"></div>
<div class="b" style="left:7.50px;top:195.76px;width:4.00px;height:0.90px;background:#333;"></div>
<span class="t"><b style="transform:translate(21.30px,191.90px) scale(0.876,1) rotate(.05deg)">R</b><b style="transform:translate(27.06px,191.90px) scale(1.097,1) rotate(.05deg)">éservation</b><b style="transform:translate(75.38px,191.90px) scale(1.056,1) rotate(.05deg)">-</b><b style="transform:translate(80.83px,191.90px) scale(0.876,1) rotate(.05deg)">C</b><b style="transform:translate(86.59px,191.90px) scale(1.097,1) rotate(.05deg)">onfirmation</b><b style="transform:translate(138.24px,191.90px) scale(1.097,1) rotate(.05deg)">de</b><b style="transform:translate(151.60px,191.90px) scale(1.097,1) rotate(.05deg)">la</b><b style="transform:translate(161.62px,191.90px) scale(1.097,1) rotate(.05deg)">mise</b><b style="transform:translate(184.95px,191.90px) scale(1.097,1) rotate(.05deg)">en</b><b style="transform:translate(198.31px,191.90px) scale(1.097,1) rotate(.05deg)">attente</b></span>
<div class="b" style="left:30.30px;top:208.33px;width:8.80px;height:1.00px;background:transparent;background:#bbbbbb;"></div>
<div class="b" style="left:39.50px;top:202.52px;width:151.00px;height:12.67px;background:#c8d8e1;"></div>
<span class="t"><b style="transform:translate(57.22px,204.52px) scale(0.863,1) rotate(.05deg)">RESA</b><b style="transform:translate(80.82px,204.52px) scale(1.040,1) rotate(.05deg)">-</b><b style="transform:translate(86.19px,204.52px) scale(0.863,1) rotate(.05deg)">MISE</b><b style="transform:translate(107.60px,204.52px) scale(0.863,1) rotate(.05deg)">EN</b><b style="transform:translate(120.73px,204.52px) scale(0.863,1) rotate(.05deg)">ATTENTE</b><b style="transform:translate(158.14px,204.52px) scale(1.310,1) rotate(.05deg)">(</b><b style="transform:translate(162.11px,204.52px) scale(0.863,1) rotate(.05deg)">E</b><b style="transform:translate(167.35px,204.52px) scale(1.081,1) rotate(.05deg)">mail</b><b style="transform:translate(185.38px,204.52px) scale(1.310,1) rotate(.05deg)">)</b></span><svg style="left:41px;top:203px" width="16" height="9" fill="#111"><circle cx="2.64" cy="3.52" r="1.45"/><circle cx="7.23" cy="3.52" r="1.45"/><circle cx="11.81" cy="3.52" r="1.45"/></svg>
<div class="b" style="left:30.30px;top:220.95px;width:8.80px;height:1.00px;background:transparent;background:#bbbbbb;"></div>
<div class="b" style="left:39.50px;top:215.14px;width:147.45px;height:12.67px;background:#c8d8e1;"></div>
<span class="t"><b style="transform:translate(41.25px,217.14px) scale(0.856,1) rotate(.05deg)">RESA</b><b style="transform:translate(64.65px,217.14px) scale(1.032,1) rotate(.05deg)">-</b><b style="transform:translate(69.98px,217.14px) scale(0.856,1) rotate(.05deg)">MISE</b><b style="transform:translate(91.21px,217.14px) scale(0.856,1) rotate(.05deg)">EN</b><b style="transform:translate(104.23px,217.14px) scale(0.856,1) rotate(.05deg)">ATTENTE</b><b style="transform:translate(141.33px,217.14px) scale(0.856,1) rotate(.05deg)">SMS</b><b style="transform:translate(160.40px,217.14px) scale(1.299,1) rotate(.05deg)">(</b><b style="transform:translate(164.34px,217.14px) scale(0.856,1) rotate(.05deg)">SMS</b><b style="transform:translate(181.21px,217.14px) scale(1.299,1) rotate(.05deg)">)</b></span>
</div>
<div class="b" style="left:667.40px;top:142.00px;width:13.60px;height:226.00px;background:#f0f0f0;"></div>
<div class="b" style="left:668.20px;top:166.00px;width:11.00px;height:56.90px;background:#cdcdcd;"></div>
<svg style="left:670.3px;top:147.2px" width="8" height="6"><path d="M0.7 4.4 L3.7 1.3 L6.7 4.4" fill="none" stroke="#3c3c3c" stroke-width="1.7"/></svg>
<svg style="left:670.3px;top:357.2px" width="8" height="6"><path d="M0.7 1.0 L3.7 4.1 L6.7 1.0" fill="none" stroke="#3c3c3c" stroke-width="1.7"/></svg>
<div class="b" style="left:477.00px;top:368.00px;width:204.00px;height:12.00px;background:#f0f0f0;"></div>
<div class="b" style="left:490.00px;top:368.60px;width:117.60px;height:10.80px;background:#cdcdcd;"></div>
<svg style="left:480.4px;top:369.3px" width="5" height="8"><path d="M4.2 0.9 L1.1 3.9 L4.2 6.9" fill="none" stroke="#3c3c3c" stroke-width="1.7"/></svg>
<svg style="left:658.4px;top:369.3px" width="5" height="8"><path d="M0.8 0.9 L3.9 3.9 L0.8 6.9" fill="none" stroke="#3c3c3c" stroke-width="1.7"/></svg>
<svg style="left:578px;top:248px" width="12" height="16" viewBox="0 0 12 16"><path d="M0.8 1.1 V14.2 L3.8 11.6 L10 10.8Z" fill="#fff" stroke="#222" stroke-width="0.8" stroke-linejoin="round"/><path d="M0.9 13.8 L3.8 11.4 L9.4 10.7" stroke="#fff" stroke-width="1.2" fill="none"/></svg>
<span class="t"><b style="transform:translate(13.30px,383.10px) scale(0.866,1) rotate(.05deg)">M</b><b style="transform:translate(19.86px,383.10px) scale(1.085,1) rotate(.05deg)">atériel</b></span>
<div class="b" style="left:13.00px;top:395.00px;width:206.00px;height:16.00px;background:#fff;border-left:1px solid #7a7a7a;border-top:1px solid #646464;border-right:1px solid #f9f9f9;border-bottom:1px solid #f9f9f9;box-shadow:inset 1px 1px 0 #b9b9b9;"></div>
<div class="b" style="left:13.00px;top:415.00px;width:206.00px;height:255.00px;background:#fff;border-left:1px solid #7a7a7a;border-top:1px solid #646464;border-right:1px solid #f9f9f9;border-bottom:1px solid #f9f9f9;box-shadow:inset 1px 1px 0 #b9b9b9;"></div>
<span class="t"><b style="transform:translate(244.30px,383.10px) scale(0.866,1) rotate(.05deg)">M</b><b style="transform:translate(250.86px,383.10px) scale(1.085,1) rotate(.05deg)">éthode</b></span>
<div class="b" style="left:244.00px;top:395.00px;width:206.00px;height:16.00px;background:#fff;border-left:1px solid #7a7a7a;border-top:1px solid #646464;border-right:1px solid #f9f9f9;border-bottom:1px solid #f9f9f9;box-shadow:inset 1px 1px 0 #b9b9b9;"></div>
<div class="b" style="left:244.00px;top:415.00px;width:206.00px;height:255.00px;background:#fff;border-left:1px solid #7a7a7a;border-top:1px solid #646464;border-right:1px solid #f9f9f9;border-bottom:1px solid #f9f9f9;box-shadow:inset 1px 1px 0 #b9b9b9;"></div>
<div class="b" style="left:14.60px;top:416.20px;width:203.40px;height:12.63px;background:#efefef;"></div>
<span class="t"><b style="transform:translate(16.40px,418.60px) scale(0.861,1) rotate(.05deg)">AFFICHEUR</b><b style="transform:translate(63.45px,418.60px) scale(0.861,1) rotate(.05deg)">CAISSE</b></span>
<span class="t"><b style="transform:translate(94.50px,418.60px) scale(1.291,1) rotate(.05deg)">[</b><b style="transform:translate(97.76px,418.60px) scale(0.851,1) rotate(.05deg)">P</b><b style="transform:translate(102.93px,418.60px) scale(1.065,1) rotate(.05deg)">ort</b><b style="transform:translate(116.42px,418.60px) scale(1.065,1) rotate(.05deg)">série</b><b style="transform:translate(137.44px,418.60px) scale(1.291,1) rotate(.05deg)">]</b></span>
<div class="b" style="left:14.60px;top:428.78px;width:203.40px;height:12.63px;background:#ffffd2;"></div>
<span class="t"><b style="transform:translate(16.40px,431.18px) scale(0.849,1) rotate(.05deg)">AFFICHEUR</b><b style="transform:translate(62.81px,431.18px) scale(0.849,1) rotate(.05deg)">CONTROLE</b><b style="transform:translate(107.94px,431.18px) scale(0.849,1) rotate(.05deg)">D</b><b style="transform:translate(113.53px,431.18px) scale(1.289,1) rotate(.05deg)">&#x27;</b><b style="transform:translate(115.77px,431.18px) scale(0.849,1) rotate(.05deg)">ACCES</b></span>
<span class="t"><b style="transform:translate(144.70px,431.18px) scale(1.291,1) rotate(.05deg)">[</b><b style="transform:translate(147.96px,431.18px) scale(0.851,1) rotate(.05deg)">P</b><b style="transform:translate(153.13px,431.18px) scale(1.065,1) rotate(.05deg)">ort</b><b style="transform:translate(166.62px,431.18px) scale(1.065,1) rotate(.05deg)">série</b><b style="transform:translate(187.64px,431.18px) scale(1.291,1) rotate(.05deg)">]</b></span>
<div class="b" style="left:14.60px;top:441.36px;width:203.40px;height:12.63px;background:#c8d8e1;"></div>
<span class="t"><b style="transform:translate(16.40px,443.76px) scale(0.915,1) rotate(.05deg)">BIODY</b></span>
<span class="t"><b style="transform:translate(44.60px,443.76px) scale(1.291,1) rotate(.05deg)">[</b><b style="transform:translate(47.86px,443.76px) scale(0.851,1) rotate(.05deg)">P</b><b style="transform:translate(53.03px,443.76px) scale(1.065,1) rotate(.05deg)">ort</b><b style="transform:translate(66.52px,443.76px) scale(1.065,1) rotate(.05deg)">série</b><b style="transform:translate(87.54px,443.76px) scale(1.291,1) rotate(.05deg)">]</b></span>
<div class="b" style="left:14.60px;top:453.94px;width:203.40px;height:12.63px;background:#c8d8e1;"></div>
<span class="t"><b style="transform:translate(16.40px,456.34px) scale(0.831,1) rotate(.05deg)">CB</b></span>
<span class="t"><b style="transform:translate(29.20px,456.34px) scale(1.291,1) rotate(.05deg)">[</b><b style="transform:translate(32.46px,456.34px) scale(0.851,1) rotate(.05deg)">P</b><b style="transform:translate(37.63px,456.34px) scale(1.065,1) rotate(.05deg)">ort</b><b style="transform:translate(51.12px,456.34px) scale(1.065,1) rotate(.05deg)">série</b><b style="transform:translate(72.14px,456.34px) scale(1.291,1) rotate(.05deg)">]</b></span>
<div class="b" style="left:14.60px;top:466.52px;width:203.40px;height:12.63px;background:#c8d8e1;"></div>
<span class="t"><b style="transform:translate(16.40px,468.92px) scale(0.913,1) rotate(.05deg)">EPSON</b><b style="transform:translate(47.83px,468.92px) scale(0.913,1) rotate(.05deg)">TM</b><b style="transform:translate(59.83px,468.92px) scale(1.101,1) rotate(.05deg)">-</b><b style="transform:translate(63.17px,468.92px) scale(0.913,1) rotate(.05deg)">H6000IV</b></span>
<span class="t"><b style="transform:translate(97.80px,468.92px) scale(1.291,1) rotate(.05deg)">[</b><b style="transform:translate(101.06px,468.92px) scale(0.851,1) rotate(.05deg)">P</b><b style="transform:translate(106.23px,468.92px) scale(1.065,1) rotate(.05deg)">ort</b><b style="transform:translate(119.72px,468.92px) scale(1.065,1) rotate(.05deg)">série</b><b style="transform:translate(140.74px,468.92px) scale(1.291,1) rotate(.05deg)">]</b></span>
<div class="b" style="left:14.60px;top:479.10px;width:203.40px;height:12.63px;background:#ffffd2;"></div>
<span class="t"><b style="transform:translate(16.40px,481.50px) scale(0.890,1) rotate(.05deg)">IMPRIMANTE</b><b style="transform:translate(69.53px,481.50px) scale(0.890,1) rotate(.05deg)">COMPATIBLE</b><b style="transform:translate(122.83px,481.50px) scale(0.890,1) rotate(.05deg)">ESC</b><b style="transform:translate(139.48px,481.50px) scale(1.351,1) rotate(.05deg)">/</b><b style="transform:translate(142.89px,481.50px) scale(0.890,1) rotate(.05deg)">POS</b></span>
<span class="t"><b style="transform:translate(162.30px,481.50px) scale(1.291,1) rotate(.05deg)">[</b><b style="transform:translate(165.56px,481.50px) scale(0.851,1) rotate(.05deg)">P</b><b style="transform:translate(170.73px,481.50px) scale(1.065,1) rotate(.05deg)">ort</b><b style="transform:translate(184.22px,481.50px) scale(1.065,1) rotate(.05deg)">série</b><b style="transform:translate(205.24px,481.50px) scale(1.291,1) rotate(.05deg)">]</b></span>
<div class="b" style="left:14.60px;top:491.68px;width:203.40px;height:12.63px;background:#c8d8e1;"></div>
<span class="t"><b style="transform:translate(16.40px,494.08px) scale(0.931,1) rotate(.05deg)">INBODY</b><b style="transform:translate(51.27px,494.08px) scale(0.931,1) rotate(.05deg)">120</b></span>
<span class="t"><b style="transform:translate(67.70px,494.08px) scale(1.291,1) rotate(.05deg)">[</b><b style="transform:translate(70.96px,494.08px) scale(0.851,1) rotate(.05deg)">P</b><b style="transform:translate(76.13px,494.08px) scale(1.065,1) rotate(.05deg)">ort</b><b style="transform:translate(89.62px,494.08px) scale(1.065,1) rotate(.05deg)">série</b><b style="transform:translate(110.64px,494.08px) scale(1.291,1) rotate(.05deg)">]</b></span>
<div class="b" style="left:14.60px;top:504.26px;width:203.40px;height:12.63px;background:#c8d8e1;"></div>
<span class="t"><b style="transform:translate(16.40px,506.66px) scale(0.931,1) rotate(.05deg)">INBODY</b><b style="transform:translate(51.27px,506.66px) scale(0.931,1) rotate(.05deg)">270</b></span>
<span class="t"><b style="transform:translate(67.70px,506.66px) scale(1.291,1) rotate(.05deg)">[</b><b style="transform:translate(70.96px,506.66px) scale(0.851,1) rotate(.05deg)">P</b><b style="transform:translate(76.13px,506.66px) scale(1.065,1) rotate(.05deg)">ort</b><b style="transform:translate(89.62px,506.66px) scale(1.065,1) rotate(.05deg)">série</b><b style="transform:translate(110.64px,506.66px) scale(1.291,1) rotate(.05deg)">]</b></span>
<div class="b" style="left:14.60px;top:516.84px;width:203.40px;height:12.63px;background:#c8d8e1;"></div>
<span class="t"><b style="transform:translate(16.40px,519.24px) scale(0.931,1) rotate(.05deg)">INBODY</b><b style="transform:translate(51.27px,519.24px) scale(0.931,1) rotate(.05deg)">570</b></span>
<span class="t"><b style="transform:translate(67.70px,519.24px) scale(1.291,1) rotate(.05deg)">[</b><b style="transform:translate(70.96px,519.24px) scale(0.851,1) rotate(.05deg)">P</b><b style="transform:translate(76.13px,519.24px) scale(1.065,1) rotate(.05deg)">ort</b><b style="transform:translate(89.62px,519.24px) scale(1.065,1) rotate(.05deg)">série</b><b style="transform:translate(110.64px,519.24px) scale(1.291,1) rotate(.05deg)">]</b></span>
<div class="b" style="left:14.60px;top:529.42px;width:203.40px;height:12.63px;background:#ffffd2;"></div>
<span class="t"><b style="transform:translate(16.40px,531.82px) scale(0.840,1) rotate(.05deg)">LECTEUR</b><b style="transform:translate(54.23px,531.82px) scale(0.840,1) rotate(.05deg)">CODE</b><b style="transform:translate(78.47px,531.82px) scale(0.840,1) rotate(.05deg)">BARRE</b></span>
<span class="t"><b style="transform:translate(107.10px,531.82px) scale(1.291,1) rotate(.05deg)">[</b><b style="transform:translate(110.36px,531.82px) scale(0.851,1) rotate(.05deg)">P</b><b style="transform:translate(115.53px,531.82px) scale(1.065,1) rotate(.05deg)">ort</b><b style="transform:translate(129.02px,531.82px) scale(1.065,1) rotate(.05deg)">série</b><b style="transform:translate(150.04px,531.82px) scale(1.291,1) rotate(.05deg)">]</b></span>
<div class="b" style="left:14.60px;top:542.00px;width:203.40px;height:12.63px;background:#ffffd2;"></div>
<span class="t"><b style="transform:translate(16.40px,544.40px) scale(0.875,1) rotate(.05deg)">STAR</b><b style="transform:translate(39.29px,544.40px) scale(0.875,1) rotate(.05deg)">SP298</b></span>
<span class="t"><b style="transform:translate(65.50px,544.40px) scale(1.291,1) rotate(.05deg)">[</b><b style="transform:translate(68.76px,544.40px) scale(0.851,1) rotate(.05deg)">P</b><b style="transform:translate(73.93px,544.40px) scale(1.065,1) rotate(.05deg)">ort</b><b style="transform:translate(87.42px,544.40px) scale(1.065,1) rotate(.05deg)">série</b><b style="transform:translate(108.44px,544.40px) scale(1.291,1) rotate(.05deg)">]</b></span>
<div class="b" style="left:14.60px;top:554.58px;width:203.40px;height:12.63px;background:#ffffd2;"></div>
<span class="t"><b style="transform:translate(16.40px,556.98px) scale(0.867,1) rotate(.05deg)">STAR</b><b style="transform:translate(39.09px,556.98px) scale(0.867,1) rotate(.05deg)">TSP600</b></span>
<span class="t"><b style="transform:translate(69.90px,556.98px) scale(1.291,1) rotate(.05deg)">[</b><b style="transform:translate(73.16px,556.98px) scale(0.851,1) rotate(.05deg)">P</b><b style="transform:translate(78.33px,556.98px) scale(1.065,1) rotate(.05deg)">ort</b><b style="transform:translate(91.82px,556.98px) scale(1.065,1) rotate(.05deg)">série</b><b style="transform:translate(112.84px,556.98px) scale(1.291,1) rotate(.05deg)">]</b></span>
<div class="b" style="left:14.60px;top:567.16px;width:203.40px;height:12.63px;background:#ffffd2;"></div>
<span class="t"><b style="transform:translate(16.40px,569.56px) scale(0.837,1) rotate(.05deg)">STAR</b><b style="transform:translate(38.31px,569.56px) scale(0.837,1) rotate(.05deg)">TSP600</b><b style="transform:translate(67.99px,569.56px) scale(1.271,1) rotate(.05deg)">(</b><b style="transform:translate(71.84px,569.56px) scale(0.837,1) rotate(.05deg)">ESC</b><b style="transform:translate(87.51px,569.56px) scale(1.271,1) rotate(.05deg)">/</b><b style="transform:translate(90.73px,569.56px) scale(0.837,1) rotate(.05deg)">P2</b><b style="transform:translate(100.05px,569.56px) scale(1.271,1) rotate(.05deg)">)</b></span>
<span class="t"><b style="transform:translate(106.20px,569.56px) scale(1.291,1) rotate(.05deg)">[</b><b style="transform:translate(109.46px,569.56px) scale(0.851,1) rotate(.05deg)">P</b><b style="transform:translate(114.63px,569.56px) scale(1.065,1) rotate(.05deg)">ort</b><b style="transform:translate(128.12px,569.56px) scale(1.065,1) rotate(.05deg)">série</b><b style="transform:translate(149.14px,569.56px) scale(1.291,1) rotate(.05deg)">]</b></span>
<div class="b" style="left:14.60px;top:579.74px;width:203.40px;height:12.63px;background:#c8d8e1;"></div>
<span class="t"><b style="transform:translate(16.40px,582.14px) scale(0.971,1) rotate(.05deg)">TANITA</b></span>
<span class="t"><b style="transform:translate(48.80px,582.14px) scale(1.291,1) rotate(.05deg)">[</b><b style="transform:translate(52.06px,582.14px) scale(0.851,1) rotate(.05deg)">P</b><b style="transform:translate(57.23px,582.14px) scale(1.065,1) rotate(.05deg)">ort</b><b style="transform:translate(70.72px,582.14px) scale(1.065,1) rotate(.05deg)">série</b><b style="transform:translate(91.74px,582.14px) scale(1.291,1) rotate(.05deg)">]</b></span>
<div class="b" style="left:14.60px;top:592.32px;width:203.40px;height:12.63px;background:#ffffd2;"></div>
<span class="t"><b style="transform:translate(16.40px,594.72px) scale(0.861,1) rotate(.05deg)">TIROIR</b><b style="transform:translate(45.17px,594.72px) scale(0.861,1) rotate(.05deg)">CAISSE</b><b style="transform:translate(76.13px,594.72px) scale(0.861,1) rotate(.05deg)">SEUL</b></span>
<span class="t"><b style="transform:translate(98.90px,594.72px) scale(1.291,1) rotate(.05deg)">[</b><b style="transform:translate(102.16px,594.72px) scale(0.851,1) rotate(.05deg)">P</b><b style="transform:translate(107.33px,594.72px) scale(1.065,1) rotate(.05deg)">ort</b><b style="transform:translate(120.82px,594.72px) scale(1.065,1) rotate(.05deg)">série</b><b style="transform:translate(141.84px,594.72px) scale(1.291,1) rotate(.05deg)">]</b></span>
<div class="b" style="left:14.60px;top:604.90px;width:203.40px;height:12.63px;background:#ffffd2;"></div>
<span class="t"><b style="transform:translate(16.40px,607.30px) scale(0.878,1) rotate(.05deg)">TLP</b><b style="transform:translate(33.32px,607.30px) scale(0.878,1) rotate(.05deg)">2844</b></span>
<span class="t"><b style="transform:translate(53.40px,607.30px) scale(1.291,1) rotate(.05deg)">[</b><b style="transform:translate(56.66px,607.30px) scale(0.851,1) rotate(.05deg)">P</b><b style="transform:translate(61.83px,607.30px) scale(1.065,1) rotate(.05deg)">ort</b><b style="transform:translate(75.32px,607.30px) scale(1.065,1) rotate(.05deg)">série</b><b style="transform:translate(96.34px,607.30px) scale(1.291,1) rotate(.05deg)">]</b></span>
<div class="b" style="left:14.60px;top:617.48px;width:203.40px;height:12.63px;background:#ffffd2;"></div>
<span class="t"><b style="transform:translate(16.40px,619.88px) scale(0.927,1) rotate(.05deg)">TM</b><b style="transform:translate(28.58px,619.88px) scale(1.117,1) rotate(.05deg)">-</b><b style="transform:translate(31.97px,619.88px) scale(0.927,1) rotate(.05deg)">T20</b></span>
<span class="t"><b style="transform:translate(48.80px,619.88px) scale(1.291,1) rotate(.05deg)">[</b><b style="transform:translate(52.06px,619.88px) scale(0.851,1) rotate(.05deg)">P</b><b style="transform:translate(57.23px,619.88px) scale(1.065,1) rotate(.05deg)">ort</b><b style="transform:translate(70.72px,619.88px) scale(1.065,1) rotate(.05deg)">série</b><b style="transform:translate(91.74px,619.88px) scale(1.291,1) rotate(.05deg)">]</b></span>
<div class="b" style="left:245.60px;top:416.20px;width:203.70px;height:12.63px;background:#efefef;"></div>
<span class="t"><b style="transform:translate(247.30px,418.60px) scale(0.866,1) rotate(.05deg)">SFR</b><b style="transform:translate(265.28px,418.60px) scale(0.866,1) rotate(.05deg)">BUSINESS</b></span>
<div class="b" style="left:245.60px;top:428.78px;width:203.70px;height:12.63px;background:#c8d8e1;"></div>
<span class="t"><b style="transform:translate(263.32px,431.18px) scale(0.866,1) rotate(.05deg)">SMS</b><b style="transform:translate(282.62px,431.18px) scale(0.866,1) rotate(.05deg)">PARTNER</b></span><svg style="left:247px;top:430px" width="16" height="9" fill="#111"><circle cx="2.70" cy="3.18" r="1.45"/><circle cx="7.30" cy="3.18" r="1.45"/><circle cx="11.90" cy="3.18" r="1.45"/></svg>
<div class="b" style="left:245.60px;top:441.36px;width:203.70px;height:12.63px;background:#c8d8e1;"></div>
<span class="t"><b style="transform:translate(247.30px,443.76px) scale(0.866,1) rotate(.05deg)">SMS</b><b style="transform:translate(264.38px,443.76px) scale(1.044,1) rotate(.05deg)">-</b><b style="transform:translate(267.54px,443.76px) scale(0.866,1) rotate(.05deg)">CONSEIL</b></span>
<div class="b" style="left:245.60px;top:453.94px;width:203.70px;height:12.63px;background:#c8d8e1;"></div>
<span class="t"><b style="transform:translate(247.30px,456.34px) scale(0.866,1) rotate(.05deg)">SPOT</b><b style="transform:translate(270.98px,456.34px) scale(0.866,1) rotate(.05deg)">HIT</b></span>
<svg style="left:683.70px;top:141.00px" width="18.6" height="18"><use href="#iPlus" width="18.6" height="18"/></svg>
<svg style="left:685.04px;top:166.10px" width="18.2" height="17.3"><use href="#iEdit" width="18.2" height="17.3"/></svg>
<svg style="left:684.80px;top:191.70px" width="16" height="17"><use href="#iTrash" width="16" height="17"/></svg>
<svg style="left:917.00px;top:141.30px" width="18.6" height="18"><use href="#iPlus" width="18.6" height="18"/></svg>
<svg style="left:918.84px;top:166.70px" width="18.2" height="17.3"><use href="#iEdit" width="18.2" height="17.3"/></svg>
<svg style="left:918.60px;top:191.70px" width="16" height="17"><use href="#iTrash" width="16" height="17"/></svg>
<svg style="left:221.40px;top:414.90px" width="18.6" height="18"><use href="#iPlus" width="18.6" height="18"/></svg>
<svg style="left:222.74px;top:440.30px" width="18.2" height="17.3"><use href="#iEdit" width="18.2" height="17.3"/></svg>
<svg style="left:222.60px;top:465.10px" width="16" height="17"><use href="#iTrash" width="16" height="17"/></svg>
<svg style="left:220.60px;top:489.90px" width="20" height="19"><use href="#iImport" width="20" height="19"/></svg>
<svg style="left:452.60px;top:415.00px" width="18.6" height="18"><use href="#iPlus" width="18.6" height="18"/></svg>
<svg style="left:454.24px;top:439.80px" width="18.2" height="17.3"><use href="#iEdit" width="18.2" height="17.3"/></svg>
<svg style="left:454.00px;top:465.10px" width="16" height="17"><use href="#iTrash" width="16" height="17"/></svg>
<svg style="left:222.54px;top:166.60px" width="18.2" height="17.3"><use href="#iEdit" width="18.2" height="17.3"/></svg>
<svg style="left:453.54px;top:166.60px" width="18.2" height="17.3"><use href="#iEdit" width="18.2" height="17.3"/></svg>
<div class="b" style="left:223.30px;top:223.60px;width:4.20px;height:4.20px;background:#000;border-radius:50%;"></div>
<div class="b" style="left:228.65px;top:223.60px;width:4.20px;height:4.20px;background:#000;border-radius:50%;"></div>
<div class="b" style="left:234.00px;top:223.60px;width:4.20px;height:4.20px;background:#000;border-radius:50%;"></div>
<svg style="left:451.80px;top:217.20px" width="20" height="17.4"><use href="#iWave" width="20" height="17.4"/></svg>
<div class="b" style="left:0.00px;top:657.00px;width:954.00px;height:14.00px;background:#000;"></div>
<div class="b" style="left:940.00px;top:0.00px;width:14.00px;height:671.00px;background:#000;"></div>
</body></html>
